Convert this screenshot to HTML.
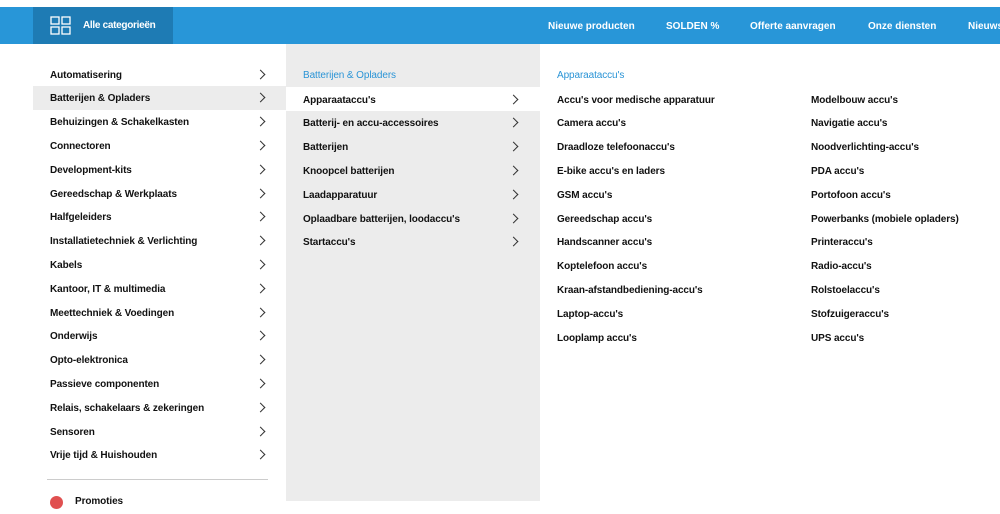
<!DOCTYPE html><html><head><style>
*{margin:0;padding:0;box-sizing:border-box}
body{width:1000px;height:501px;overflow:hidden;background:#fff;font-family:"Liberation Sans",sans-serif;font-size:10px;color:#111;position:relative}
.bar{position:absolute;top:7px;left:0;width:1000px;height:37px;background:#2896d8}
.btn{position:absolute;left:33px;top:0;width:140px;height:37px;background:#1e7bb4;color:#fff;font-weight:bold}
.nav{position:absolute;top:1px;height:37px;line-height:37px;color:#fff;font-weight:bold;white-space:nowrap;font-size:10px}
.it{position:absolute;height:24px;line-height:24px;font-weight:bold;letter-spacing:-.1px;white-space:nowrap}
.ch{position:absolute;width:7px;height:7px;border-right:1.1px solid #333;border-top:1.1px solid #333;transform:rotate(45deg)}
</style></head><body>
<div class="bar">
<div class="btn">
<svg style="position:absolute;left:17px;top:9px" width="21" height="19" viewBox="0 0 21 19" fill="none" stroke="#fff" stroke-width="1.3"><rect x="1" y="1" width="8" height="7"/><rect x="12" y="1" width="8" height="7"/><rect x="1" y="11" width="8" height="7"/><rect x="12" y="11" width="8" height="7"/></svg>
<span style="position:absolute;left:50px;top:13px;letter-spacing:-.3px">Alle categorieën</span></div>
<div class="nav" style="left:548px">Nieuwe producten</div>
<div class="nav" style="left:666px">SOLDEN %</div>
<div class="nav" style="left:750px">Offerte aanvragen</div>
<div class="nav" style="left:868px">Onze diensten</div>
<div class="nav" style="left:968px">Nieuws</div>
</div>
<div style="position:absolute;left:33px;top:86px;width:253px;height:24px;background:#ececec"></div>
<div style="position:absolute;left:286px;top:44px;width:254px;height:457px;background:#ececec"></div>
<div style="position:absolute;left:286px;top:87px;width:254px;height:24px;background:#fff"></div>
<div style="position:absolute;left:47px;top:479px;width:221px;height:1px;background:#ccc"></div>
<div style="position:absolute;left:50px;top:496px;width:13px;height:13px;border-radius:50%;background:#e05050"></div>
<div class="it" style="left:75px;top:490px">Promoties</div>
<div id="c"></div>
<script>
var L=["Automatisering","Batterijen & Opladers","Behuizingen & Schakelkasten","Connectoren","Development-kits","Gereedschap & Werkplaats","Halfgeleiders","Installatietechniek & Verlichting","Kabels","Kantoor, IT & multimedia","Meettechniek & Voedingen","Onderwijs","Opto-elektronica","Passieve componenten","Relais, schakelaars & zekeringen","Sensoren","Vrije tijd & Huishouden"];
var M=["Apparaataccu's","Batterij- en accu-accessoires","Batterijen","Knoopcel batterijen","Laadapparatuur","Oplaadbare batterijen, loodaccu's","Startaccu's"];
var A=["Accu's voor medische apparatuur","Camera accu's","Draadloze telefoonaccu's","E-bike accu's en laders","GSM accu's","Gereedschap accu's","Handscanner accu's","Koptelefoon accu's","Kraan-afstandbediening-accu's","Laptop-accu's","Looplamp accu's"];
var B=["Modelbouw accu's","Navigatie accu's","Noodverlichting-accu's","PDA accu's","Portofoon accu's","Powerbanks (mobiele opladers)","Printeraccu's","Radio-accu's","Rolstoelaccu's","Stofzuigeraccu's","UPS accu's"];
var h="",s=23.8;
function e(t){return t.replace(/&/g,"&amp;")}
L.forEach(function(t,i){var y=62+i*s;h+='<div class="it" style="left:50px;top:'+(y+1.5)+'px">'+e(t)+'</div><div class="ch" style="left:257px;top:'+(y+8.5)+'px"></div>'});
h+='<div class="it" style="left:303px;top:64px;color:#2a94d6;font-weight:normal">Batterijen &amp; Opladers</div>';
M.forEach(function(t,i){var y=87+i*s;h+='<div class="it" style="left:303px;top:'+(y+1.5)+'px">'+e(t)+'</div><div class="ch" style="left:510px;top:'+(y+8.5)+'px"></div>'});
h+='<div class="it" style="left:557px;top:64px;color:#2a94d6;font-weight:normal">Apparaataccu\'s</div>';
A.forEach(function(t,i){h+='<div class="it" style="left:557px;top:'+(88.5+i*s)+'px">'+e(t)+'</div>'});
B.forEach(function(t,i){h+='<div class="it" style="left:811px;top:'+(88.5+i*s)+'px">'+e(t)+'</div>'});
document.getElementById("c").innerHTML=h;
</script>
</body></html>
